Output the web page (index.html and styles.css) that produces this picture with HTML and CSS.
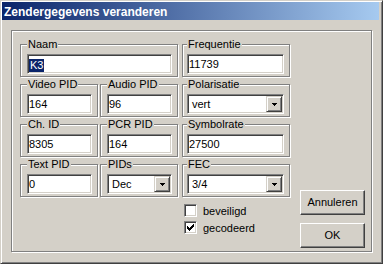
FILE: index.html
```html
<!DOCTYPE html>
<html lang="nl">
<head>
    <meta charset="UTF-8">
    <title>Zendergegevens veranderen</title>
    <link rel="stylesheet" href="styles.css">
</head>
<body>
    <div class="window">
        <div class="titlebar">Zendergegevens veranderen</div>
        <div class="panel">
            <div class="fields">
                <div class="group wide">
                    <div class="group-label">Naam</div>
                    <div class="field"><span class="selected">K3</span></div>
                </div>
                <div class="group c3">
                    <div class="group-label">Frequentie</div>
                    <div class="field">11739</div>
                </div>

                <div class="group">
                    <div class="group-label">Video PID</div>
                    <div class="field">164</div>
                </div>
                <div class="group">
                    <div class="group-label">Audio PID</div>
                    <div class="field">96</div>
                </div>
                <div class="group c3">
                    <div class="group-label">Polarisatie</div>
                    <div class="field select"><span class="value">vert</span><span class="drop"><svg width="5" height="3" viewBox="0 0 5 3"><path d="M0 0h5v1h-5zM1 1h3v1h-3zM2 2h1v1h-1z"/></svg></span></div>
                </div>

                <div class="group">
                    <div class="group-label">Ch. ID</div>
                    <div class="field">8305</div>
                </div>
                <div class="group">
                    <div class="group-label">PCR PID</div>
                    <div class="field">164</div>
                </div>
                <div class="group c3">
                    <div class="group-label">Symbolrate</div>
                    <div class="field">27500</div>
                </div>

                <div class="group">
                    <div class="group-label">Text PID</div>
                    <div class="field">0</div>
                </div>
                <div class="group">
                    <div class="group-label">PIDs</div>
                    <div class="field select"><span class="value">Dec</span><span class="drop"><svg width="5" height="3" viewBox="0 0 5 3"><path d="M0 0h5v1h-5zM1 1h3v1h-3zM2 2h1v1h-1z"/></svg></span></div>
                </div>
                <div class="group c3">
                    <div class="group-label">FEC</div>
                    <div class="field select"><span class="value">3/4</span><span class="drop"><svg width="5" height="3" viewBox="0 0 5 3"><path d="M0 0h5v1h-5zM1 1h3v1h-3zM2 2h1v1h-1z"/></svg></span></div>
                </div>

                <div class="checks">
                    <div class="check"><span class="box"></span>beveiligd</div>
                    <div class="check"><span class="box"><svg width="7" height="7" viewBox="0 0 7 7"><path d="M6 0h1v1h-1zM5 1h2v1h-2zM0 2h1v1h-1zM4 2h3v1h-3zM0 3h2v1h-2zM3 3h3v1h-3zM0 4h5v1h-5zM1 5h3v1h-3zM2 6h1v1h-1z"/></svg></span>gecodeerd</div>
                </div>
            </div>
            <div class="buttons">
                <div class="btn">Annuleren</div>
                <div class="btn">OK</div>
            </div>
        </div>
    </div>
</body>
</html>
```

FILE: styles.css
```css
body { margin: 0; font-family: "Liberation Sans", Arial, sans-serif; font-size: 11px; color: #000; background: #d4d0c8; }

.window { width: 383px; height: 264px; box-sizing: border-box; background: #d4d0c8; border: 1px solid; border-color: #d4d0c8 #404040 #404040 #d4d0c8; box-shadow: inset 1px 1px #fff, inset -1px -1px #808080; padding: 1px 3px 0 1px; display: flex; flex-direction: column; }

.titlebar { height: 18px; box-sizing: border-box; padding: 2px 0 0 2px; line-height: 16px; font-size: 12px; font-weight: bold; color: #fff; background: linear-gradient(to right, #0a246a, #a6caf0); white-space: nowrap; }

/* etched frame round the fields and buttons */
.panel { margin: 10px 0 0 9px; width: 361px; height: 222px; box-sizing: border-box; border: 1px solid #808080; box-shadow: inset 1px 1px #fff, 1px 1px #fff; padding: 13px 0 0 8px; display: flex; }

.fields { display: grid; grid-template-columns: 80px 82px 108px; row-gap: 7px; align-content: start; }

.group { width: 78px; box-sizing: border-box; border: 1px solid #808080; box-shadow: inset 1px 1px #fff, 1px 1px #fff; padding: 0 5px 2px 6px; }
.group.wide { grid-column: span 2; width: 158px; }
.group.c3 { width: 108px; padding-left: 4px; }
.group-label { width: fit-content; margin-top: -7px; padding: 0 1px; line-height: 13px; background: #d4d0c8; }

.field { margin-top: 3px; height: 20px; box-sizing: border-box; border: 1px solid; border-color: #808080 #fff #fff #808080; box-shadow: inset 1px 1px #404040, inset -1px -1px #d4d0c8; background: #fff; padding: 0 1px; line-height: 18px; white-space: nowrap; }
.selected { display: inline-block; line-height: 13px; padding: 0 1px; vertical-align: middle; background: #0a246a; color: #fff; }

.select { display: flex; justify-content: space-between; padding: 1px; line-height: 16px; }
.select .value { padding-left: 3px; }
.drop { width: 16px; height: 16px; box-sizing: border-box; border: 1px solid; border-color: #d4d0c8 #404040 #404040 #d4d0c8; box-shadow: inset 1px 1px #fff, inset -1px -1px #808080; background: #d4d0c8; display: flex; align-items: center; justify-content: center; padding-top: 1px; }
.drop svg, .box svg { display: block; shape-rendering: crispEdges; }

.checks { grid-column: 3; padding-left: 2px; }
.check { display: flex; align-items: center; gap: 6px; height: 13px; margin-bottom: 4px; }
.box { width: 13px; height: 13px; box-sizing: border-box; border: 1px solid; border-color: #808080 #fff #fff #808080; box-shadow: inset 1px 1px #404040, inset -1px -1px #d4d0c8; background: #fff; display: flex; align-items: center; justify-content: center; }

.buttons { align-self: flex-end; margin: 0 0 3px 10px; display: flex; flex-direction: column; gap: 8px; }
.btn { width: 65px; height: 25px; box-sizing: border-box; border: 1px solid; border-color: #fff #404040 #404040 #fff; box-shadow: inset -1px -1px #808080; text-align: center; line-height: 23px; }
```
